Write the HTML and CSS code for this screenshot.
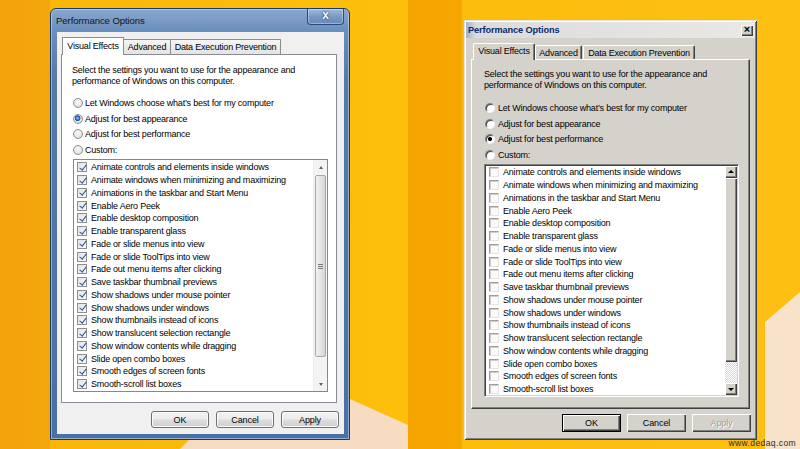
FILE: index.html
```html
<!DOCTYPE html>
<html>
<head>
<meta charset="utf-8">
<title>Performance Options</title>
<link rel="stylesheet" href="styles.css">
</head>
<body>
<div class="desktop">
  <div class="bg-cream bg-cream-mid"></div>
  <div class="bg-cream bg-cream-right"></div>

  <div class="w7">
    <div class="w7-titlebar">
      <span class="w7-title">Performance Options</span>
      <div class="w7-close">x</div>
    </div>
    <div class="w7-client">
      <div class="w7-tabs">
        <div class="w7-tab w7-tab-active t-ve">Visual Effects</div>
        <div class="w7-tab t-adv">Advanced</div>
        <div class="w7-tab t-dep">Data Execution Prevention</div>
      </div>
      <div class="w7-panel">
        <p class="intro">Select the settings you want to use for the appearance and<br>performance of Windows on this computer.</p>
        <div class="radios">
          <div class="radio-row"><span class="w7-radio"></span>Let Windows choose what’s best for my computer</div>
          <div class="radio-row"><span class="w7-radio on"></span>Adjust for best appearance</div>
          <div class="radio-row"><span class="w7-radio"></span>Adjust for best performance</div>
          <div class="radio-row"><span class="w7-radio"></span>Custom:</div>
        </div>
        <div class="w7-list">
          <div class="items">
            <div class="item"><span class="w7-check"></span>Animate controls and elements inside windows</div>
            <div class="item"><span class="w7-check"></span>Animate windows when minimizing and maximizing</div>
            <div class="item"><span class="w7-check"></span>Animations in the taskbar and Start Menu</div>
            <div class="item"><span class="w7-check"></span>Enable Aero Peek</div>
            <div class="item"><span class="w7-check"></span>Enable desktop composition</div>
            <div class="item"><span class="w7-check"></span>Enable transparent glass</div>
            <div class="item"><span class="w7-check"></span>Fade or slide menus into view</div>
            <div class="item"><span class="w7-check"></span>Fade or slide ToolTips into view</div>
            <div class="item"><span class="w7-check"></span>Fade out menu items after clicking</div>
            <div class="item"><span class="w7-check"></span>Save taskbar thumbnail previews</div>
            <div class="item"><span class="w7-check"></span>Show shadows under mouse pointer</div>
            <div class="item"><span class="w7-check"></span>Show shadows under windows</div>
            <div class="item"><span class="w7-check"></span>Show thumbnails instead of icons</div>
            <div class="item"><span class="w7-check"></span>Show translucent selection rectangle</div>
            <div class="item"><span class="w7-check"></span>Show window contents while dragging</div>
            <div class="item"><span class="w7-check"></span>Slide open combo boxes</div>
            <div class="item"><span class="w7-check"></span>Smooth edges of screen fonts</div>
            <div class="item"><span class="w7-check"></span>Smooth-scroll list boxes</div>
          </div>
          <div class="w7-scroll">
            <div class="w7-sbtn"><span class="w7-arrow-up"></span></div>
            <div class="w7-thumb"><span class="w7-grip"></span></div>
            <div class="w7-track"></div>
            <div class="w7-sbtn"><span class="w7-arrow-down"></span></div>
          </div>
        </div>
      </div>
      <div class="w7-buttons">
        <div class="w7-btn">OK</div>
        <div class="w7-btn">Cancel</div>
        <div class="w7-btn">Apply</div>
      </div>
    </div>
  </div>

  <div class="cl">
    <div class="cl-titlebar">
      <span class="cl-title">Performance Options</span>
      <div class="cl-close">×</div>
    </div>
    <div class="cl-body">
      <div class="cl-tabs">
        <div class="cl-tab cl-tab-active c-ve">Visual Effects</div>
        <div class="cl-tab c-adv">Advanced</div>
        <div class="cl-tab c-dep">Data Execution Prevention</div>
      </div>
      <div class="cl-panel">
        <p class="intro">Select the settings you want to use for the appearance and<br>performance of Windows on this computer.</p>
        <div class="radios cl-radios">
          <div class="radio-row cl-row"><span class="cl-radio"></span>Let Windows choose what’s best for my computer</div>
          <div class="radio-row cl-row"><span class="cl-radio"></span>Adjust for best appearance</div>
          <div class="radio-row cl-row"><span class="cl-radio on"></span>Adjust for best performance</div>
          <div class="radio-row cl-row"><span class="cl-radio"></span>Custom:</div>
        </div>
        <div class="cl-list">
          <div class="items cl-items">
            <div class="item"><span class="cl-check"></span>Animate controls and elements inside windows</div>
            <div class="item"><span class="cl-check"></span>Animate windows when minimizing and maximizing</div>
            <div class="item"><span class="cl-check"></span>Animations in the taskbar and Start Menu</div>
            <div class="item"><span class="cl-check"></span>Enable Aero Peek</div>
            <div class="item"><span class="cl-check"></span>Enable desktop composition</div>
            <div class="item"><span class="cl-check"></span>Enable transparent glass</div>
            <div class="item"><span class="cl-check"></span>Fade or slide menus into view</div>
            <div class="item"><span class="cl-check"></span>Fade or slide ToolTips into view</div>
            <div class="item"><span class="cl-check"></span>Fade out menu items after clicking</div>
            <div class="item"><span class="cl-check"></span>Save taskbar thumbnail previews</div>
            <div class="item"><span class="cl-check"></span>Show shadows under mouse pointer</div>
            <div class="item"><span class="cl-check"></span>Show shadows under windows</div>
            <div class="item"><span class="cl-check"></span>Show thumbnails instead of icons</div>
            <div class="item"><span class="cl-check"></span>Show translucent selection rectangle</div>
            <div class="item"><span class="cl-check"></span>Show window contents while dragging</div>
            <div class="item"><span class="cl-check"></span>Slide open combo boxes</div>
            <div class="item"><span class="cl-check"></span>Smooth edges of screen fonts</div>
            <div class="item"><span class="cl-check"></span>Smooth-scroll list boxes</div>
          </div>
          <div class="cl-scroll">
            <div class="cl-sbtn"><span class="cl-arrow-up"></span></div>
            <div class="cl-thumb"></div>
            <div class="cl-track"></div>
            <div class="cl-sbtn"><span class="cl-arrow-down"></span></div>
          </div>
        </div>
      </div>
      <div class="cl-buttons">
        <div class="cl-btn cl-default">OK</div>
        <div class="cl-btn">Cancel</div>
        <div class="cl-btn cl-disabled">Apply</div>
      </div>
    </div>
  </div>

  <div class="watermark">www.dedaq.com</div>
</div>
</body>
</html>
```

FILE: styles.css
```css
* { box-sizing: border-box; }
html, body { margin: 0; padding: 0; }
body {
  width: 800px;
  height: 449px;
  overflow: hidden;
  font-family: "Liberation Sans", Arial, sans-serif;
  font-size: 9px;
  color: #000;
}

/* ---------- desktop ---------- */
.desktop {
  position: relative;
  width: 800px;
  height: 449px;
  overflow: hidden;
  background: linear-gradient(90deg,
    #f3a10d 0, #f4a60c 50px,
    #fab70a 50px, #fdbf0a 408px,
    #f6a400 408px, #f7a701 462px,
    #fcbc0c 462px, #fdc012 800px);
}
.bg-cream { position: absolute; left: 0; top: 0; width: 800px; height: 449px; background: #f7dcc2; }
.bg-cream-mid { clip-path: polygon(180px 449px, 192px 437px, 350px 399px, 408px 425px, 408px 449px); }
.bg-cream-right { background: #f8e2ca; clip-path: polygon(765px 449px, 765px 322px, 800px 292px, 800px 449px); }

.intro { margin: 0; line-height: 11px; letter-spacing: -0.2px; }
.radios { margin-top: 8px; padding-left: 1px; }
.radio-row { height: 15.75px; display: flex; align-items: center; gap: 2px; letter-spacing: -0.2px; white-space: nowrap; }
.items { flex: 1; padding: 1px 0 0 3px; }
.item { height: 12.75px; display: flex; align-items: center; gap: 4px; letter-spacing: -0.2px; white-space: nowrap; }

/* ---------- Windows 7 window ---------- */
.w7 {
  position: absolute;
  left: 50px; top: 8px;
  width: 300px; height: 432px;
  display: flex; flex-direction: column;
  padding: 0 5px 5px 6px;
  border: 1px solid #1c3a66;
  border-radius: 6px 6px 0 0;
  background: linear-gradient(180deg, #8aa8cf 0, #6a8ebd 22px, #5479ab 70px, #4a71a5 100%);
  box-shadow: inset 0 0 0 1px rgba(205, 222, 245, .55);
}
.w7-titlebar { height: 23px; flex: none; display: flex; align-items: center; }
.w7-title { font-size: 9.6px; color: #141414; margin-left: -1px; letter-spacing: -0.1px; }
.w7-close {
  margin-left: auto; align-self: flex-start;
  width: 37px; height: 16px;
  border: 1px solid #2b4a78; border-top: 0;
  border-radius: 0 0 4px 4px;
  background: linear-gradient(180deg, #a3bbdb, #7a9ac6 50%, #6689b9);
  box-shadow: inset 0 0 0 1px rgba(255, 255, 255, .35);
  color: #fff; font-weight: bold; font-size: 12px; line-height: 1;
  display: flex; align-items: center; justify-content: center;
  padding-bottom: 3px;
  text-shadow: 0 0 2px #1c3a66, 0 0 1px #1c3a66;
}
.w7-client {
  flex: 1;
  background: #f0f0f0;
  padding: 5px 0 6px 4px;
  display: flex; flex-direction: column;
}
.w7-tabs { display: flex; height: 17px; margin-left: 1px; align-items: flex-end; position: relative; z-index: 1; flex: none; }
.w7-tab {
  height: 15px;
  border: 1px solid #898c95; border-bottom: 0;
  background: linear-gradient(#f5f5f5, #e3e3e3);
  display: flex; align-items: center; justify-content: center;
  letter-spacing: -0.2px; white-space: nowrap;
  margin-left: -1px;
}
.w7-tab:first-child { margin-left: 0; }
.t-ve { width: 62px; }
.t-adv { width: 48px; }
.t-dep { width: 111px; }
.w7-tab-active { height: 18px; margin-bottom: -1px; background: #fff; padding-bottom: 2px; }
.w7-panel {
  width: 276px; height: 349px; flex: none;
  background: #fff;
  border: 1px solid #898c95;
  padding: 10px 0 0 10px;
}
.w7-radio {
  width: 10px; height: 10px; flex: none;
  border: 1px solid #8e8f8f; border-radius: 50%;
  background: radial-gradient(circle at 50% 40%, #fbfbfb 0, #e6e6e6 60%, #d2d2d2 100%);
}
.w7-radio.on {
  background: radial-gradient(circle at 45% 40%, #a9d0ff 0, #3d78c9 1.6px, #1f4f9e 2.6px, #e9e9e9 3.2px, #d6d6d6 100%);
}
.w7-list {
  margin: 1px 0 0 1px;
  width: 255px; height: 233px;
  border: 1px solid #828790;
  background: #fff;
  display: flex;
}
.w7-check {
  position: relative;
  width: 10px; height: 10px; flex: none;
  border: 1px solid #8e8f8f;
  background: linear-gradient(135deg, #e3e3e3, #f9f9f9);
}
.w7-check::after {
  content: "";
  position: absolute;
  left: 2.5px; top: -0.5px;
  width: 2.5px; height: 6px;
  border-right: 1.8px solid #34559a;
  border-bottom: 1.8px solid #34559a;
  transform: rotate(38deg);
}
.w7-scroll {
  width: 14px; flex: none;
  background: #f3f3f3;
  border-left: 1px solid #ececec;
  display: flex; flex-direction: column;
}
.w7-sbtn { height: 14px; flex: none; display: flex; align-items: center; justify-content: center; }
.w7-arrow-up { width: 0; height: 0; border-left: 2.5px solid transparent; border-right: 2.5px solid transparent; border-bottom: 3px solid #606060; }
.w7-arrow-down { width: 0; height: 0; border-left: 2.5px solid transparent; border-right: 2.5px solid transparent; border-top: 3px solid #606060; }
.w7-thumb {
  height: 182px; flex: none;
  margin: 1px 1px 0 1px;
  border: 1px solid #a9a9a9; border-radius: 2px;
  background: linear-gradient(90deg, #f1f1f1, #e2e2e2 60%, #d6d6d6);
  display: flex; align-items: center; justify-content: center;
}
.w7-grip {
  width: 5px; height: 5px;
  background: repeating-linear-gradient(180deg, #7a7a7a 0 1px, transparent 1px 2px);
}
.w7-track { flex: 1; }
.w7-buttons { margin-top: 8px; display: flex; justify-content: flex-end; gap: 7px; padding-right: 5px; flex: none; }
.w7-btn {
  width: 58px; height: 17px;
  border: 1px solid #707070; border-radius: 3px;
  background: linear-gradient(#f3f3f3, #ebebeb 48%, #dddddd 52%, #cfcfcf);
  box-shadow: inset 0 0 0 1px #fbfbfb;
  display: flex; align-items: center; justify-content: center;
  letter-spacing: -0.1px;
}

/* ---------- Classic window ---------- */
.cl {
  position: absolute;
  left: 464px; top: 20px;
  width: 293px; height: 420px;
  background: #d5d2cc;
  padding: 2px;
  display: flex; flex-direction: column;
  box-shadow: inset 1px 1px 0 #e4e2de, inset -1px -1px 0 #404040, inset 2px 2px 0 #fff, inset -2px -2px 0 #808080;
}
.cl-titlebar {
  height: 16px; flex: none;
  display: flex; align-items: center;
  padding: 0 2px;
  background: linear-gradient(90deg, #9fb2d3 0, #dcdcdc 10px, #e9e8e4 100%);
}
.cl-title { font-weight: bold; color: #0c2a6c; font-size: 9.2px; letter-spacing: -0.1px; }
.cl-close {
  margin-left: auto;
  width: 12px; height: 11px;
  background: #d5d2cc;
  box-shadow: inset 1px 1px 0 #fff, inset -1px -1px 0 #404040, inset -2px -2px 0 #808080;
  display: flex; align-items: center; justify-content: center;
  font-size: 11px; font-weight: bold; line-height: 1;
  padding-bottom: 1px;
}
.cl-body { flex: 1; padding: 5px 4px 6px 5px; display: flex; flex-direction: column; }
.cl-tabs { display: flex; height: 16px; margin-left: 2px; align-items: flex-end; position: relative; z-index: 1; flex: none; }
.cl-tab {
  height: 14px;
  border-top: 1px solid #fff; border-left: 1px solid #fff; border-right: 1px solid #404040;
  border-radius: 2px 2px 0 0;
  box-shadow: inset -1px 0 0 #808080;
  background: #d5d2cc;
  display: flex; align-items: center; justify-content: center;
  letter-spacing: -0.2px; white-space: nowrap;
}
.c-ve { width: 62px; }
.c-adv { width: 47px; }
.c-dep { width: 112px; margin-left: 1px; }
.cl-tab-active { height: 17px; margin-bottom: -1px; padding-bottom: 2px; }
.cl-panel {
  width: 279px; height: 350px; flex: none;
  border-top: 1px solid #fff; border-left: 1px solid #fff;
  border-right: 1px solid #404040; border-bottom: 1px solid #404040;
  box-shadow: inset -1px -1px 0 #808080;
  padding: 9px 0 0 12px;
}
.cl-radios { margin-top: 9px; }
.cl-row { gap: 3px; }
.cl-radio {
  width: 10px; height: 10px; flex: none;
  border-radius: 50%;
  border: 1px solid; border-color: #808080 #f4f4f4 #f4f4f4 #808080;
  background: #fff;
  box-shadow: inset 1px 1px 0 #404040;
}
.cl-radio.on { background: radial-gradient(circle, #000 0 1.8px, #fff 2.3px); }
.cl-list {
  margin-top: 1px;
  width: 255px; height: 233px;
  border: 1px solid; border-color: #808080 #fff #fff #808080;
  padding: 1px;
  box-shadow: inset 1px 1px 0 #404040, inset -1px -1px 0 #d5d2cc;
  background: #fff;
  display: flex;
}
.cl-items { padding: 0 0 0 3px; }
.cl-check {
  width: 10px; height: 10px; flex: none;
  border: 1px solid; border-color: #a09e98 #e6e4e0 #e6e4e0 #a09e98;
  background: #fafafa;
  box-shadow: inset 1px 1px 0 #cfcdc8;
}
.cl-scroll { width: 12px; flex: none; display: flex; flex-direction: column; }
.cl-sbtn {
  height: 12px; flex: none;
  background: #d5d2cc;
  box-shadow: inset 1px 1px 0 #fff, inset -1px -1px 0 #404040, inset -2px -2px 0 #808080;
  display: flex; align-items: center; justify-content: center;
}
.cl-arrow-up { width: 0; height: 0; border-left: 3px solid transparent; border-right: 3px solid transparent; border-bottom: 3px solid #000; margin-top: -1px; }
.cl-arrow-down { width: 0; height: 0; border-left: 3px solid transparent; border-right: 3px solid transparent; border-top: 3px solid #000; }
.cl-thumb {
  height: 184px; flex: none;
  background: #d5d2cc;
  box-shadow: inset 1px 1px 0 #fff, inset -1px -1px 0 #404040, inset -2px -2px 0 #808080;
}
.cl-track {
  flex: 1;
  background-color: #f1efeb;
  background-image: repeating-conic-gradient(#fff 0 25%, #dcd9d3 0 50%);
  background-size: 2px 2px;
}
.cl-buttons { margin-top: 5px; display: flex; justify-content: flex-end; gap: 6px; flex: none; }
.cl-btn {
  width: 59px; height: 18px;
  background: #d5d2cc;
  box-shadow: inset 1px 1px 0 #fff, inset -1px -1px 0 #404040, inset -2px -2px 0 #808080;
  display: flex; align-items: center; justify-content: center;
  letter-spacing: -0.1px;
}
.cl-default {
  border: 1px solid #000;
}
.cl-disabled { color: #a19e98; text-shadow: 1px 1px 0 #fff; }

.watermark {
  position: absolute;
  right: 4px; bottom: 1px;
  font-size: 8.5px;
  color: #2a2a2a;
  letter-spacing: 0.4px;
}
```
